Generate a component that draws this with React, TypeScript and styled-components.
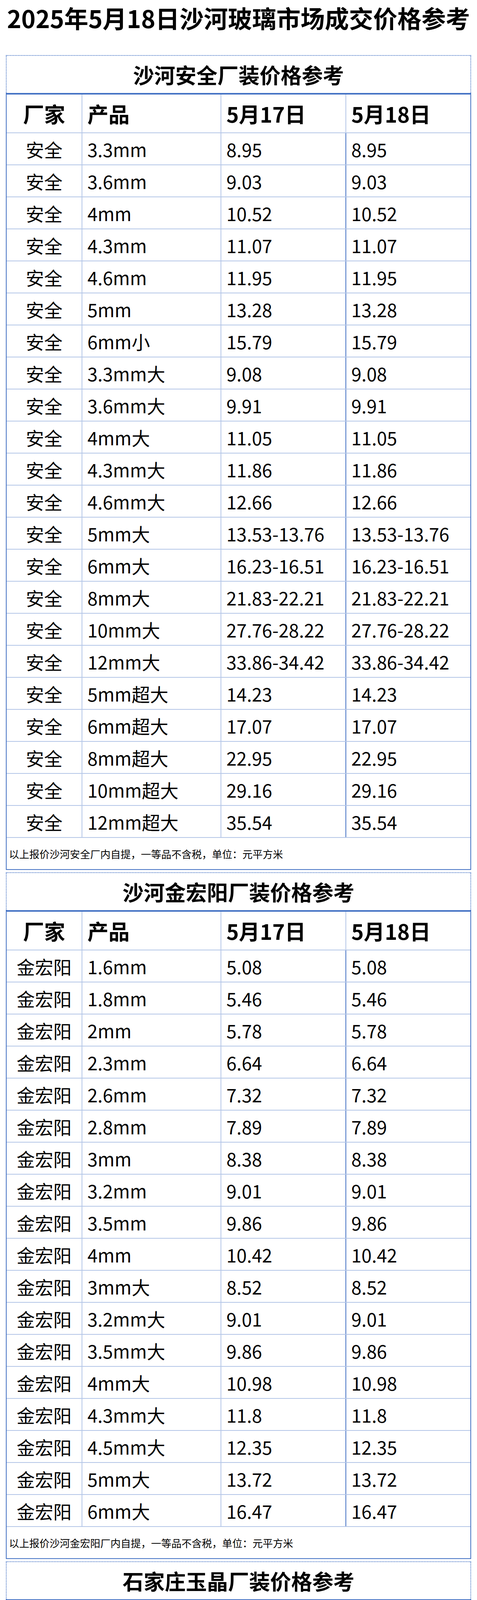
import React from 'react'
import styled, { createGlobalStyle } from 'styled-components'

const GlobalStyle = createGlobalStyle`
  html, body {
    margin: 0;
    padding: 0;
    background: #ffffff;
  }
  body {
    font-family: "Noto Sans CJK SC", "Noto Sans", sans-serif;
    color: #000000;
  }
`

const BLUE = '#4472c4'
const LIGHT = '#b4c6e7'

const Page = styled.div`
  width: 1222px;
  overflow: hidden;
`

const Title = styled.h1`
  margin: 0 0 51px;
  height: 90px;
  line-height: 90px;
  text-align: center;
  font-size: 62px;
  font-weight: 700;
  white-space: nowrap;
`

const Section = styled.section`
  width: 1192px;
  margin: 0 0 6px 15px;
`

const Band = styled.div`
  height: 95px;
  border: 2px dotted ${BLUE};
  border-bottom: none;
  display: flex;
  align-items: center;
  justify-content: center;
  font-size: 54px;
  font-weight: 700;
`

const Table = styled.div`
  border: 2px solid ${BLUE};
  border-top-width: 4px;
`

const Row = styled.div<{ head?: boolean }>`
  display: grid;
  grid-template-columns: 194px 356px 320px 1fr;
  height: ${p => (p.head ? '99px' : '82px')};
  border-bottom: 2px solid ${LIGHT};
  box-sizing: border-box;
  font-size: ${p => (p.head ? '54px' : '47px')};
  font-weight: ${p => (p.head ? 700 : 400)};
`

const Cell = styled.div<{ center?: boolean; divider?: string; green?: boolean }>`
  display: flex;
  align-items: center;
  justify-content: ${p => (p.center ? 'center' : 'flex-start')};
  padding-left: ${p => (p.center ? '0' : '13px')};
  border-right: ${p => (p.divider ? `2px solid ${p.divider}` : 'none')};
  color: ${p => (p.green ? '#00b050' : '#000000')};
  white-space: nowrap;
  overflow: hidden;
`

const Note = styled.div`
  height: 80px;
  display: flex;
  align-items: center;
  padding-left: 6px;
  font-size: 26px;
`

type Item = [string, string, string]

const anquan: Item[] = [
  ['3.3mm', '8.95', '8.95'],
  ['3.6mm', '9.03', '9.03'],
  ['4mm', '10.52', '10.52'],
  ['4.3mm', '11.07', '11.07'],
  ['4.6mm', '11.95', '11.95'],
  ['5mm', '13.28', '13.28'],
  ['6mm小', '15.79', '15.79'],
  ['3.3mm大', '9.08', '9.08'],
  ['3.6mm大', '9.91', '9.91'],
  ['4mm大', '11.05', '11.05'],
  ['4.3mm大', '11.86', '11.86'],
  ['4.6mm大', '12.66', '12.66'],
  ['5mm大', '13.53-13.76', '13.53-13.76'],
  ['6mm大', '16.23-16.51', '16.23-16.51'],
  ['8mm大', '21.83-22.21', '21.83-22.21'],
  ['10mm大', '27.76-28.22', '27.76-28.22'],
  ['12mm大', '33.86-34.42', '33.86-34.42'],
  ['5mm超大', '14.23', '14.23'],
  ['6mm超大', '17.07', '17.07'],
  ['8mm超大', '22.95', '22.95'],
  ['10mm超大', '29.16', '29.16'],
  ['12mm超大', '35.54', '35.54'],
]

const jinhongyang: Item[] = [
  ['1.6mm', '5.08', '5.08'],
  ['1.8mm', '5.46', '5.46'],
  ['2mm', '5.78', '5.78'],
  ['2.3mm', '6.64', '6.64'],
  ['2.6mm', '7.32', '7.32'],
  ['2.8mm', '7.89', '7.89'],
  ['3mm', '8.38', '8.38'],
  ['3.2mm', '9.01', '9.01'],
  ['3.5mm', '9.86', '9.86'],
  ['4mm', '10.42', '10.42'],
  ['3mm大', '8.52', '8.52'],
  ['3.2mm大', '9.01', '9.01'],
  ['3.5mm大', '9.86', '9.86'],
  ['4mm大', '10.98', '10.98'],
  ['4.3mm大', '11.8', '11.8'],
  ['4.5mm大', '12.35', '12.35'],
  ['5mm大', '13.72', '13.72'],
  ['6mm大', '16.47', '16.47'],
]

const yujing: Item[] = [
  ['4mm大', '10.78', '10.78'],
  ['4.3mm大', '11.59', '11.59'],
  ['5mm大', '13.47', '13.47'],
  ['6mm大', '16.17', '16.17'],
  ['7.2mm大', '19.4', '19.4'],
  ['7.5mm大', '20.22', '20.22'],
  ['8mm大', '21.76', '21.76'],
  ['10mm大', '27.43', '27.43'],
  ['12mm大', '33.5', '33.5'],
]

type PriceTableProps = {
  title: string
  maker: string
  rows: Item[]
  note: string
  green?: boolean
}

const PriceTable = ({ title, maker, rows, note, green }: PriceTableProps) => (
  <Section>
    <Band>{title}</Band>
    <Table>
      <Row head>
        <Cell center divider={LIGHT}>厂家</Cell>
        <Cell divider={LIGHT}>产品</Cell>
        <Cell divider={LIGHT}>5月17日</Cell>
        <Cell>5月18日</Cell>
      </Row>
      {rows.map(([product, d17, d18], i) => (
        <Row key={i}>
          <Cell center divider={LIGHT}>{maker}</Cell>
          <Cell divider={LIGHT}>{product}</Cell>
          <Cell divider={BLUE} green={green}>{d17}</Cell>
          <Cell>{d18}</Cell>
        </Row>
      ))}
      <Note>{note}</Note>
    </Table>
  </Section>
)

export default function App() {
  return (
    <Page>
      <GlobalStyle />
      <Title>2025年5月18日沙河玻璃市场成交价格参考</Title>
      <PriceTable
        title="沙河安全厂装价格参考"
        maker="安全"
        rows={anquan}
        note="以上报价沙河安全厂内自提，一等品不含税，单位：元平方米"
      />
      <PriceTable
        title="沙河金宏阳厂装价格参考"
        maker="金宏阳"
        rows={jinhongyang}
        note="以上报价沙河金宏阳厂内自提，一等品不含税，单位：元平方米"
      />
      <PriceTable
        title="石家庄玉晶厂装价格参考"
        maker="玉晶"
        rows={yujing}
        note="以上报价石家庄玉晶厂内自提，一等品不含税，单位：元平方米"
        green
      />
    </Page>
  )
}
